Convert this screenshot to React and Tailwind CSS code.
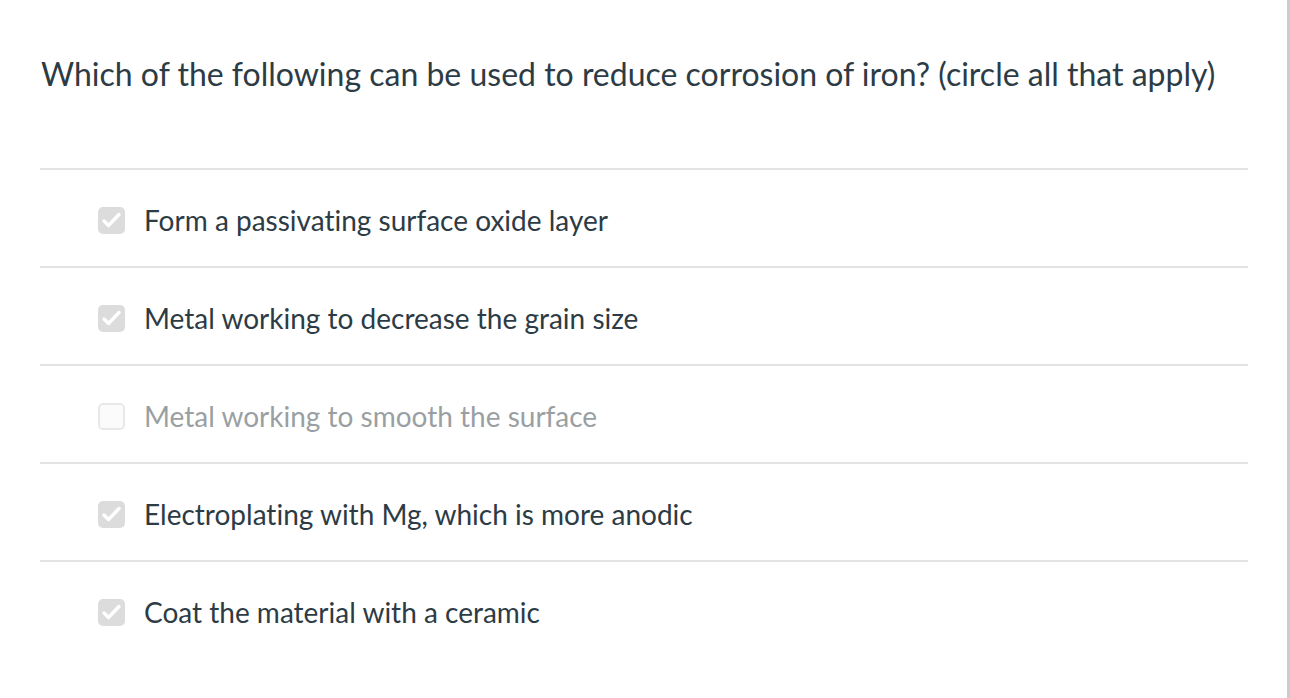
export default function App() {
  const options = [
    { text: "Form a passivating surface oxide layer", checked: true },
    { text: "Metal working to decrease the grain size", checked: true },
    { text: "Metal working to smooth the surface", checked: false },
    { text: "Electroplating with Mg, which is more anodic", checked: true },
    { text: "Coat the material with a ceramic", checked: true },
  ];
  return (
    <div className="w-[1290px] h-[698px] bg-white flex overflow-hidden [font-variant-ligatures:none]" style={{ fontFamily: "Lato, 'Noto Sans', sans-serif" }}>
      <div className="flex-1 pl-[40px] pr-[39px]">
        <div className="h-[168px] pt-[52px]">
          <p className="text-[32px] leading-[44px] text-[#2d3b45] pl-[1px]">
            Which of the following can be used to reduce corrosion of iron? (circle all that apply)
          </p>
        </div>
        {options.map((o, i) => (
          <div key={i} className="h-[98px] border-t-2 border-[#e3e3e3] flex items-center pt-[4px] pl-[58px]">
            <div
              className={
                "w-[27px] h-[27px] rounded-[5px] flex items-center justify-center " +
                (o.checked ? "bg-[#dcdcdc]" : "bg-[#fbfbfb] border-2 border-[#e8e8e8]")
              }
            >
              {o.checked && (
                <svg width="27" height="27" viewBox="0 0 27 27">
                  <path d="M6 14 L10.5 18.5 L21 7.5" fill="none" stroke="#ffffff" strokeWidth="3.4" strokeLinecap="round" strokeLinejoin="round" />
                </svg>
              )}
            </div>
            <span className={"ml-[19px] text-[28px] leading-[36px] " + (o.checked ? "text-[#2d3b45]" : "text-[#9a9fa3]")}>
              {o.text}
            </span>
          </div>
        ))}
      </div>
      <div className="w-[3px] bg-[#c7cdd1]" />
    </div>
  );
}
